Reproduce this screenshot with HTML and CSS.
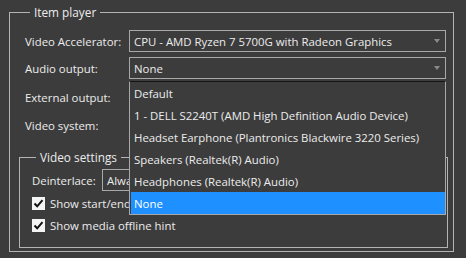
FILE: index.html
```html
<!DOCTYPE html>
<html>
<head>
<meta charset="utf-8">
<link rel="stylesheet" href="styles.css">
</head>
<body>
<fieldset class="group outer">
  <legend class="title">Item player</legend>
  <div class="row r1">
    <span class="label">Video Accelerator:</span>
    <div class="combo wide"><span class="value">CPU - AMD Ryzen 7 5700G with Radeon Graphics</span><span class="arrow"></span></div>
  </div>
  <div class="row r2">
    <span class="label">Audio output:</span>
    <div class="combo wide"><span class="value">None</span><span class="arrow"></span></div>
  </div>
  <div class="row r3">
    <span class="label">External output:</span>
  </div>
  <div class="row r4">
    <span class="label">Video system:</span>
  </div>
  <fieldset class="group inner">
    <legend class="title">Video settings</legend>
    <div class="row deint">
      <span class="label short">Deinterlace:</span>
      <div class="combo narrow"><span class="value">Always</span></div>
    </div>
    <div class="check c1"><span class="box"><svg width="13" height="13" viewBox="0 0 13 13"><path d="M2.5 6.5 L5.2 9.3 L10.5 3.2" fill="none" stroke="#111" stroke-width="2"/></svg></span><span>Show start/end timecode</span></div>
    <div class="check c2"><span class="box"><svg width="13" height="13" viewBox="0 0 13 13"><path d="M2.5 6.5 L5.2 9.3 L10.5 3.2" fill="none" stroke="#111" stroke-width="2"/></svg></span><span>Show media offline hint</span></div>
  </fieldset>
</fieldset>
<div class="popup">
  <div class="item">Default</div>
  <div class="item">1 - DELL S2240T (AMD High Definition Audio Device)</div>
  <div class="item">Headset Earphone (Plantronics Blackwire 3220 Series)</div>
  <div class="item">Speakers (Realtek(R) Audio)</div>
  <div class="item">Headphones (Realtek(R) Audio)</div>
  <div class="item sel">None</div>
</div>
</body>
</html>
```
FILE: styles.css
```css
html, body {
  margin: 0;
  padding: 0;
  background: #3c3c3c;
}
body {
  font-family: "Open Sans", "Noto Sans", sans-serif;
  font-size: 11.4px;
  color: #ececec;
  width: 466px;
  height: 258px;
  overflow: hidden;
  position: relative;
}
.group {
  border: 1px solid #b4b4b4;
  margin: 0;
  padding: 0;
  min-width: 0;
}
.title {
  padding: 0 4px;
  margin-left: 5px;
  line-height: 16px;
  height: 16px;
  font-size: 11.8px;
}
.outer {
  margin: 4px 0 0 9px;
  width: 445px;
  padding: 0 0 0 15px;
  box-sizing: border-box;
  height: 248px;
}
.row {
  display: flex;
  align-items: center;
  height: 22px;
}
.r1 { margin-top: 10px; }
.r2 { margin-top: 5px; }
.r3 { margin-top: 7px; }
.r4 { margin-top: 6px; }
.label {
  width: 104px;
  flex: none;
}
.combo {
  height: 22px;
  box-sizing: border-box;
  border: 1px solid #a8a8a8;
  display: flex;
  align-items: center;
  padding-left: 4px;
  position: relative;
  white-space: nowrap;
}
.wide { width: 317px; }
.arrow {
  position: absolute;
  right: 5px;
  top: 8px;
  width: 0;
  height: 0;
  border-left: 3.5px solid transparent;
  border-right: 3.5px solid transparent;
  border-top: 4px solid #8a8a8a;
}
.inner {
  margin: 13px 0 0 -6px;
  width: 429px;
  height: 99px;
  box-sizing: border-box;
  padding: 0 0 0 12px;
}
.inner .title { margin-left: 4px; }
.deint { margin-top: 4px; }
.label.short { width: 70px; }
.narrow { width: 100px; }
.check {
  display: flex;
  align-items: center;
  height: 22px;
  margin-top: 1px;
  white-space: nowrap;
}
.check.c2 { margin-top: 0; }
.box {
  width: 13px;
  height: 13px;
  background: #f4f4f4;
  box-sizing: border-box;
  margin-right: 5px;
  display: block;
  flex: none;
}
.box svg { display: block; }
.popup {
  position: absolute;
  left: 129px;
  top: 81px;
  width: 317px;
  box-sizing: border-box;
  border: 1px solid #a8a8a8;
  border-top-color: #151515;
  background: #3c3c3c;
  padding-left: 1px;
}
.item {
  height: 22px;
  line-height: 23px;
  padding-left: 3px;
  white-space: nowrap;
}
.item.sel {
  background: #1e90ff;
  color: #ffffff;
}
```
